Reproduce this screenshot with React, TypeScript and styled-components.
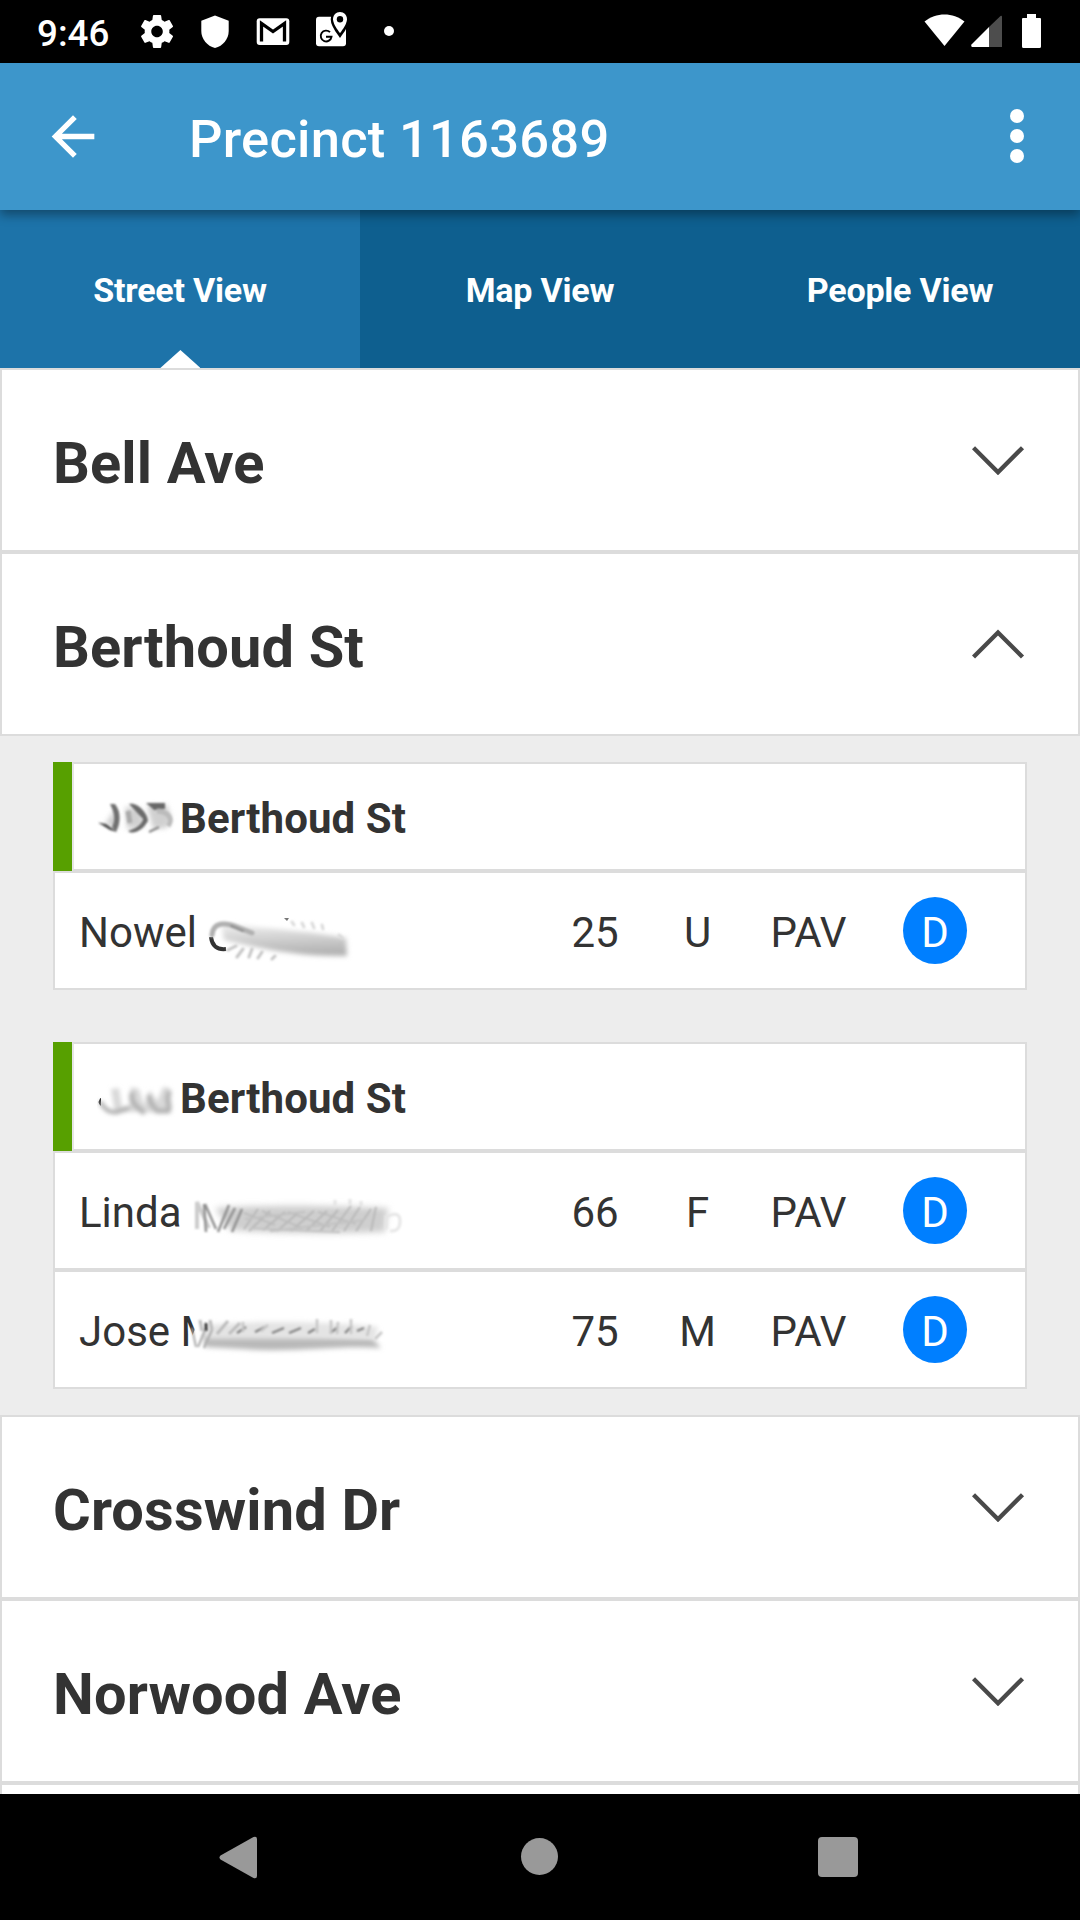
import React from "react";
import styled, { createGlobalStyle } from "styled-components";

const GlobalStyle = createGlobalStyle`
  *, *::before, *::after { box-sizing: border-box; }
  body { margin: 0; background: #000; }
  svg { display: block; flex: none; }
`;

const Screen = styled.div`
  width: 1080px;
  height: 1920px;
  display: flex;
  flex-direction: column;
  overflow: hidden;
  background: #fff;
  color: #333;
  font-family: Roboto, "Liberation Sans", sans-serif;
`;

const StatusBar = styled.header`
  flex: none;
  height: 63px;
  display: flex;
  justify-content: space-between;
  padding: 0 39px 0 37px;
  background: #000;
  color: #fff;
`;

const StatusGroup = styled.div`
  display: flex;
  align-items: center;
`;

const Clock = styled.span`
  width: 100px;
  padding-top: 4px;
  font-size: 36.75px;
  font-weight: 500;
  line-height: 44px;
`;

const AppBar = styled.div`
  flex: none;
  position: relative;
  z-index: 1;
  height: 147px;
  display: flex;
  align-items: center;
  padding: 0 47px 0 41px;
  background: #3d96cb;
  color: #fff;
  box-shadow: 0 5px 10px rgba(0, 0, 0, 0.36);
`;

const Title = styled.h1`
  flex: 1;
  margin: 0;
  padding: 5px 0 0 84px;
  font-size: 52.5px;
  font-weight: 500;
  letter-spacing: 0.25px;
  line-height: 62px;
`;

const Tabs = styled.nav`
  flex: none;
  height: 158px;
  display: grid;
  grid-template-columns: repeat(3, 1fr);
`;

const Tab = styled.div<{ $active?: boolean }>`
  position: relative;
  display: flex;
  align-items: center;
  justify-content: center;
  padding-top: 2px;
  background: ${(p) => (p.$active ? "#1d73a9" : "#0e5f8f")};
  color: #fff;
  font-size: 34.1px;
  font-weight: 700;
  letter-spacing: -0.25px;
`;

const TabPointer = styled.i`
  position: absolute;
  bottom: 0;
  left: 50%;
  width: 41px;
  height: 18px;
  transform: translateX(-50%);
  background: #fff;
  clip-path: polygon(51% 0, 100% 100%, 2% 100%);
`;

const List = styled.main`
  flex: 1;
  min-height: 0;
  overflow: hidden;
`;

const Street = styled.div`
  height: 184px;
  display: flex;
  align-items: center;
  justify-content: space-between;
  padding: 0 53px 0 51px;
  border: 2px solid #dcdcdc;
  background: #fff;
`;

const StreetName = styled.h2`
  margin: 0;
  padding-top: 6px;
  font-size: 57.75px;
  font-weight: 700;
  letter-spacing: 0.15px;
  line-height: 68px;
`;

const Panel = styled.section`
  display: flex;
  flex-direction: column;
  gap: 52px;
  padding: 26px 53px;
  background: #ededed;
`;

const House = styled.div`
  display: flex;
  flex-direction: column;
`;

const HouseHeader = styled.div`
  height: 109px;
  display: flex;
  border-left: 19px solid #57a000;
`;

const Address = styled.div`
  flex: 1;
  display: flex;
  align-items: center;
  gap: 3px;
  padding: 3px 0 0 23px;
  border: 2px solid #dcdcdc;
  border-left-color: #e6e6e6;
  background: #fff;
  font-size: 42px;
  font-weight: 700;
  letter-spacing: 0.1px;
`;

const VoterRow = styled.div`
  height: 119px;
  display: grid;
  grid-template-columns: 465px 102px 103px 119px 134px;
  align-items: center;
  padding-left: 24px;
  border: 2px solid #dcdcdc;
  background: #fff;
  font-size: 42px;
`;

const Name = styled.div`
  position: relative;
  padding-top: 4px;
  line-height: 50px;
`;

const Cell = styled.div`
  padding-top: 4px;
  text-align: center;
  line-height: 50px;
`;

const Party = styled.div`
  justify-self: center;
  width: 64px;
  height: 67px;
  padding-top: 4px;
  border-radius: 50%;
  background: #007fff;
  color: #fff;
  line-height: 63px;
  text-align: center;
`;

const NameScribble = styled.svg`
  position: absolute;
  left: 0;
  top: -4px;
`;

const NavBar = styled.footer`
  flex: none;
  height: 126px;
  display: flex;
  align-items: center;
  justify-content: space-between;
  padding: 0 222px 0 219px;
  background: #000;
`;

const Chevron = ({ open }: { open?: boolean }) => (
  <svg width="53" height="30" viewBox="0 0 53 30" fill="none" stroke="#494949" strokeWidth="4.4">
    <path d={open ? "M1.5 28 26 3.5 50.5 28" : "M1.5 2.700 26 27.200 50.5 2.700"} />
  </svg>
);

const StatusIcons = () => (
  <svg width="258" height="63" viewBox="137 0 258 63" fill="#fff">
    <path
      transform="translate(137.3 11.7) scale(1.645)"
      d="M19.43 12.98c.04-.32.07-.64.07-.98s-.03-.66-.07-.98l2.11-1.65c.19-.15.24-.42.12-.64l-2-3.46c-.12-.22-.39-.3-.61-.22l-2.49 1c-.52-.4-1.08-.73-1.69-.98l-.38-2.65C14.46 2.18 14.25 2 14 2h-4c-.25 0-.46.18-.49.42l-.38 2.65c-.61.25-1.17.59-1.69.98l-2.49-1c-.23-.09-.49 0-.61.22l-2 3.46c-.13.22-.07.49.12.64l2.11 1.65c-.04.32-.07.65-.07.98s.03.66.07.98l-2.11 1.65c-.19.15-.24.42-.12.64l2 3.46c.12.22.39.3.61.22l2.49-1c.52.4 1.08.73 1.69.98l.38 2.65c.03.24.24.42.49.42h4c.25 0 .46-.18.49-.42l.38-2.65c.61-.25 1.17-.59 1.69-.98l2.49 1c.23.09.49 0 .61-.22l2-3.46c.12-.22.07-.49-.12-.64l-2.11-1.65zM12 15.5c-1.93 0-3.5-1.57-3.5-3.5s1.57-3.5 3.5-3.5 3.5 1.57 3.5 3.5-1.57 3.5-3.5 3.5z"
    />
    <path d="M215 15.5 228.7 20.8V31C228.7 39 223 46 215 48 207 46 201.3 39 201.3 31V20.8Z" />
    <rect x="256.7" y="18.3" width="32.6" height="26.7" rx="3" />
    <path d="M261.5 41.5V23.5L273 31.5 284.5 23.5V41.5" fill="none" stroke="#000" strokeWidth="3.3" />
    <rect x="316" y="16.7" width="30" height="29.5" rx="3" />
    <path
      d="M340 12.3C335.9 12.3 333 15.3 333 19.2 333 24.5 340 34 340 34S347 24.5 347 19.2C347 15.3 344.1 12.3 340 12.3Z"
      stroke="#000"
      strokeWidth="4.6"
    />
    <path d="M340 12C336 12 333 15.2 333 19.2 333 24.5 340 33 340 33S347 24.5 347 19.2C347 15.2 344 12 340 12Z" />
    <circle cx="340" cy="19.3" r="3.2" fill="#000" />
    <path d="M330 32.2A5.4 5.4 0 1 0 331.5 36.8H326" fill="none" stroke="#000" strokeWidth="1.9" />
    <circle cx="389" cy="31" r="5" />
  </svg>
);

const SystemIcons = () => (
  <svg width="117" height="63" viewBox="924 0 117 63" fill="#fff">
    <path d="M944.5 46 924.5 21.5C936 12 953 12 964.500 21.5Z" />
    <path d="M989 27V47H1002V17Q1002 15 1000.500 16Z" fill="#4d4d4d" />
    <path d="M989 27V47H972Q970.500 46 971.500 44.500Z" />
    <path d="M1027 14H1036V18H1040Q1041 18 1041 19V46.500Q1041 48 1039.500 48H1023.500Q1022 48 1022 46.500V19Q1022 18 1023 18H1027Z" />
  </svg>
);

const Soften = ({ id, amount }: { id: string; amount: number }) => (
  <filter id={id} x="-20%" y="-40%" width="140%" height="180%">
    <feGaussianBlur stdDeviation={amount} />
  </filter>
);

/* House numbers are hidden behind rubbed-out strokes. */
const NumberScribbleA = () => (
  <svg width="80" height="42" viewBox="0 0 80 42" fill="none">
    <Soften id="na" amount={1.1} />
    <Soften id="na2" amount={2.4} />
    <g filter="url(#na2)">
      <path d="M8 27 18 12 21 32ZM28 10 44 12 47 30 30 32ZM50 9 70 8 74 20 70 31 56 32Z" fill="#d0d0d0" />
    </g>
    <g filter="url(#na)">
      <path d="M1 25.500 9 27 20 35 13 33Z" fill="#444" />
      <path d="M13 7H18C25 16 23 27 19 35L15 30C19 22 17 15 13 7Z" fill="#707070" />
      <path d="M32 7C41 5 51 17 51 24 45 34 36 38 31 34 40 31 45 27 46 22Z" fill="#6a6a6a" />
      <path d="M31 14 33 26" stroke="#aaa" strokeWidth="5" />
      <path d="M49 6H68V12L57 13Z" fill="#686868" />
      <path d="M60 14C72 15 76 22 71 29" stroke="#bbb" strokeWidth="5" />
      <path d="M52 35 62 30" stroke="#888" strokeWidth="2.5" />
    </g>
  </svg>
);

const NumberScribbleB = () => (
  <svg width="80" height="42" viewBox="0 0 80 42" fill="none">
    <Soften id="nb" amount={1.9} />
    <path d="M3 21.5 4 21V29Q1.500 27 1.500 25Z" fill="#222" />
    <g filter="url(#nb)" strokeLinecap="round">
      <path d="M14 12 22 11 25 30 32 31 34 10 42 12 47 28 53 13 60 24 66 10 73 11 74 36 60 36 46 35 30 35 18 37Z" fill="#d9d9d9" />
      <path d="M4 26C8 33 13 36 20 35L31 31" stroke="#aaa" strokeWidth="4" />
      <path d="M35 17C33 25 39 29 46 35M52 20C54 27 55 29 58 31M72 16C68 24 75 30 71 34H60" stroke="#b0b0b0" strokeWidth="5" />
    </g>
  </svg>
);

const NowelScribble = () => (
  <NameScribble width="290" height="66" viewBox="79 897 290 66" fill="none">
    <Soften id="sa" amount={1.3} />
    <Soften id="sa2" amount={2.8} />
    <linearGradient id="rub" x1="0" y1="0" x2="0.15" y2="1">
      <stop offset="0" stopColor="#f2f2f2" />
      <stop offset="1" stopColor="#b2b2b2" />
    </linearGradient>
    <path d="M211 934C212 943 217 947 226 946" stroke="#333" strokeWidth="4" />
    <g filter="url(#sa2)">
      <path d="M221 920C254 925 306 927 346 935L347 953C302 954 262 946 224 937Z" fill="url(#rub)" />
    </g>
    <g filter="url(#sa)" strokeLinecap="round">
      <path d="M212 932C213 919 225 919 237 924L252 930" stroke="#b0b0b0" strokeWidth="5" />
      <path d="M231 923 243 928" stroke="#888" strokeWidth="2" />
      <path d="M228 947 236 943M237 954 243 946M249 954 252 946M258 955 262 949M272 956 275 953" stroke="#c4c4c4" strokeWidth="3" />
      <path d="M292 919 294 922M302 920 304 924M312 920 314 925M322 922 323 926M339 932 342 935" stroke="#dadada" strokeWidth="3" />
    </g>
    <path d="M284 915H289L287 918Z" fill="#777" />
  </NameScribble>
);

const LindaScribble = () => (
  <NameScribble width="340" height="66" viewBox="79 1177 340 66" fill="none">
    <Soften id="sb" amount={0.9} />
    <Soften id="sb2" amount={3} />
    <path d="M215 1205C280 1201 340 1203 388 1205L385 1229C330 1231 280 1231 230 1227Z" fill="#cfcfcf" filter="url(#sb2)" />
    <g filter="url(#sb)">
      <path d="M197 1226V1199L209 1225" stroke="#ccc" strokeWidth="4" />
      <path d="M204 1201 206 1229M205 1201 216 1226M218 1229 229 1202M224 1226 235 1205M232 1229 242 1206" stroke="#909090" strokeWidth="2.500" />
      <path
        d="M244 1226 258 1206M249 1228 270 1208M263 1227 285 1209M277 1228 298 1210M291 1228 314 1208M306 1228 327 1208M320 1228 338 1207M332 1228 351 1203M344 1228 360 1204M356 1228 371 1206M371 1228 376 1204"
        stroke="#b8b8b8"
        strokeWidth="2"
      />
      <path d="M244 1210 275 1222M262 1208 302 1225M288 1209 330 1224M318 1209 356 1221" stroke="#bbb" strokeWidth="1.8" />
      <path d="M335 1203V1197M350 1202V1196M361 1204V1198" stroke="#e3e3e3" strokeWidth="3" />
      <path d="M386 1226V1214Q400 1207 400 1218T390 1228" stroke="#e6e6e6" strokeWidth="3" />
      <path d="M245 1216 305 1209M270 1228 365 1217M250 1225 340 1229" stroke="#c2c2c2" strokeWidth="2" />
    </g>
  </NameScribble>
);

const JoseScribble = () => (
  <NameScribble width="330" height="66" viewBox="79 1296 330 66" fill="none">
    <Soften id="sc" amount={0.8} />
    <Soften id="sc2" amount={2.500} />
    <path d="M200 1312H222V1349H193L192 1334Z" fill="#fff" />
    <path d="M203 1331C260 1328 330 1333 372 1335L381 1345C340 1342 290 1350 243 1346L205 1344Z" fill="#b8b8b8" filter="url(#sc2)" />
    <path d="M205 1322C260 1317 330 1319 378 1324L375 1336H206Z" fill="#e4e4e4" filter="url(#sc2)" />
    <g filter="url(#sc)">
      <path d="M192 1325 196 1344M198 1344 206 1325M204 1345 212 1327" stroke="#aaa" strokeWidth="2" />
      <path d="M200 1317 202 1328M210 1317 212 1327M217 1331 228 1318M229 1331 240 1320" stroke="#bbb" strokeWidth="3" />
      <path d="M206 1320V1328" stroke="#333" strokeWidth="3" />
      <path d="M237 1330 246 1324M255 1329 265 1324M272 1330 284 1325M289 1330 301 1325M308 1330 315 1326M330 1330 337 1325M345 1330 352 1323M357 1328 364 1325" stroke="#808080" strokeWidth="2.300" />
      <path d="M243 1329V1319M261 1328 268 1322M317 1330V1316M331 1331V1317M337 1331 338 1319M351 1331V1316M367 1333 370 1322M375 1336 382 1329" stroke="#c6c6c6" strokeWidth="2.500" />
    </g>
  </NameScribble>
);

type VoterProps = { name: string; age: number; sex: string; scribble: React.ReactNode };

const Voter = ({ name, age, sex, scribble }: VoterProps) => (
  <VoterRow>
    <Name>
      {name}
      {scribble}
    </Name>
    <Cell>{age}</Cell>
    <Cell>{sex}</Cell>
    <Cell>PAV</Cell>
    <Party>D</Party>
  </VoterRow>
);

const StreetItem = ({ name, open }: { name: string; open?: boolean }) => (
  <Street>
    <StreetName>{name}</StreetName>
    <Chevron open={open} />
  </Street>
);

export default function App() {
  return (
    <>
      <GlobalStyle />
      <Screen>
        <StatusBar>
          <StatusGroup>
            <Clock>9:46</Clock>
            <StatusIcons />
          </StatusGroup>
          <StatusGroup>
            <SystemIcons />
          </StatusGroup>
        </StatusBar>
        <AppBar>
          <svg width="64" height="64" viewBox="0 0.2 24 24" fill="#fff">
            <path d="M20 11H7.830l5.590-5.590L12 4l-8 8 8 8 1.410-1.410L7.830 13H20v-2z" />
          </svg>
          <Title>Precinct 1163689</Title>
          <svg width="32" height="64" viewBox="0 0 32 64" fill="#fff">
            <circle cx="16" cy="11" r="7" />
            <circle cx="16" cy="31" r="7" />
            <circle cx="16" cy="51" r="7" />
          </svg>
        </AppBar>
        <Tabs>
          <Tab $active>
            Street View
            <TabPointer />
          </Tab>
          <Tab>Map View</Tab>
          <Tab>People View</Tab>
        </Tabs>
        <List>
          <StreetItem name="Bell Ave" />
          <StreetItem name="Berthoud St" open />
          <Panel>
            <House>
              <HouseHeader>
                <Address>
                  <NumberScribbleA />
                  Berthoud St
                </Address>
              </HouseHeader>
              <Voter name="Nowel" age={25} sex="U" scribble={<NowelScribble />} />
            </House>
            <House>
              <HouseHeader>
                <Address>
                  <NumberScribbleB />
                  Berthoud St
                </Address>
              </HouseHeader>
              <Voter name="Linda" age={66} sex="F" scribble={<LindaScribble />} />
              <Voter name="Jose M" age={75} sex="M" scribble={<JoseScribble />} />
            </House>
          </Panel>
          <StreetItem name="Crosswind Dr" />
          <StreetItem name="Norwood Ave" />
          <Street />
        </List>
        <NavBar>
          <svg width="38" height="43" viewBox="0 0 38 43" fill="#999">
            <path d="M1.500 19.500 34.500 1Q38 0 38 3V40Q38 43 34.500 42L1.500 23.500Q-.5 21.500 1.500 19.500Z" />
          </svg>
          <svg width="40" height="38" viewBox="0 0 40 38" fill="#999">
            <circle cx="21.500" cy="18.500" r="18.500" />
          </svg>
          <svg width="40" height="40" viewBox="0 0 40 40" fill="#999">
            <rect width="40" height="40" rx="4" />
          </svg>
        </NavBar>
      </Screen>
    </>
  );
}
